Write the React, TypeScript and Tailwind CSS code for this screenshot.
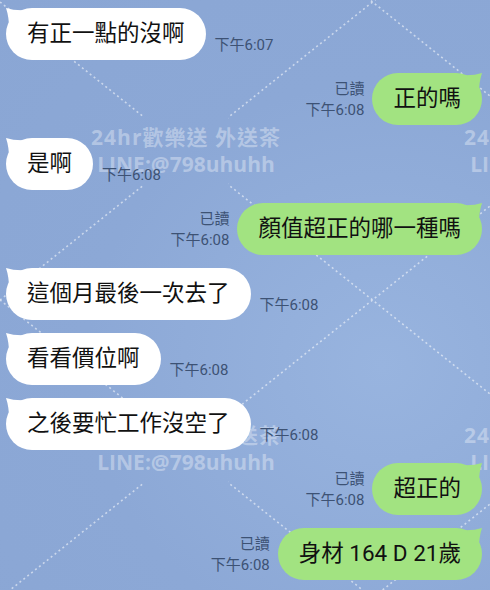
import React from "react";

type Msg = { side: "in" | "out"; text: string; time: string };

const messages: Msg[] = [
  { side: "in", text: "有正一點的沒啊", time: "下午6:07" },
  { side: "out", text: "正的嗎", time: "下午6:08" },
  { side: "in", text: "是啊", time: "下午6:08" },
  { side: "out", text: "顏值超正的哪一種嗎", time: "下午6:08" },
  { side: "in", text: "這個月最後一次去了", time: "下午6:08" },
  { side: "in", text: "看看價位啊", time: "下午6:08" },
  { side: "in", text: "之後要忙工作沒空了", time: "下午6:08" },
  { side: "out", text: "超正的", time: "下午6:08" },
  { side: "out", text: "身材 164 D 21歲", time: "下午6:08" },
];

// watermark centres on the wallpaper lattice
const marks = [
  [186, 151],
  [559, 151],
  [186, 449],
  [559, 449],
];

function Wallpaper() {
  const lines: [number, number, number, number][] = [];
  for (const c of [-296, 2, 300]) lines.push([0, c, 490, 0.8 * 490 + c]);
  for (const c of [300, 598, 896]) lines.push([0, c, 490, -0.8 * 490 + c]);

  return (
    <div className="absolute inset-0">
      <svg width="490" height="590" className="absolute inset-0">
        <defs>
          <mask id="wm">
            <rect width="490" height="590" fill="white" />
            {marks.map(([x, y]) => (
              <rect key={`${x}-${y}`} x={x - 42} y={y - 35} width="84" height="70" fill="black" />
            ))}
          </mask>
        </defs>
        <g mask="url(#wm)" stroke="white" strokeOpacity="0.55" strokeWidth="1.6" strokeDasharray="2 3">
          {lines.map(([x1, y1, x2, y2], i) => (
            <line key={i} x1={x1} y1={y1} x2={x2} y2={y2} />
          ))}
        </g>
      </svg>
      {marks.map(([x, y]) => (
        <div
          key={`t-${x}-${y}`}
          className="absolute flex flex-col items-center font-bold text-white/35 text-[21px] leading-[27px] whitespace-nowrap -translate-x-1/2 -translate-y-1/2 font-['Open_Sans','Noto_Sans_CJK_TC',sans-serif]"
          style={{ left: x, top: y }}
        >
          <span className="tracking-[1px]">24hr歡樂送 外送茶</span>
          <span>LINE:@798uhuhh</span>
        </div>
      ))}
    </div>
  );
}

function Tail({ right }: { right?: boolean }) {
  return (
    <svg
      width="22"
      height="20"
      viewBox="0 0 22 20"
      className={right ? "absolute right-0 top-0 -scale-x-100" : "absolute left-0 top-0"}
    >
      <path d="M0 0 Q9 3 22 2 L22 20 L3 20 Q3 9 0 0 Z" fill={right ? "#a2e381" : "#ffffff"} />
    </svg>
  );
}

function Bubble({ msg }: { msg: Msg }) {
  const out = msg.side === "out";
  return (
    <div className="relative shrink-0">
      <Tail right={out} />
      <div
        className={`relative h-[52px] rounded-[26px] px-[21px] flex items-center text-[22.5px] text-[#111] whitespace-nowrap ${
          out ? "bg-[#a2e381]" : "bg-white"
        }`}
      >
        {msg.text}
      </div>
    </div>
  );
}

export default function App() {
  return (
    <div className="relative w-[490px] h-[590px] overflow-hidden bg-[radial-gradient(ellipse_at_78%_62%,#98b4df_0%,#8ca8d6_55%,#8aa6d4_100%)] font-['Roboto','Noto_Sans_CJK_TC',sans-serif]">
      <Wallpaper />
      <div className="relative flex flex-col gap-[13px] pt-[8px] pl-[6px] pr-[8px]">
        {messages.map((m, i) =>
          m.side === "in" ? (
            <div key={i} className="flex items-end gap-[9px]">
              <Bubble msg={m} />
              <span className="mb-[5px] text-[15px] leading-[20px] text-[#3d5274]">{m.time}</span>
            </div>
          ) : (
            <div key={i} className="flex items-end justify-end gap-[8px]">
              <div className="mb-[4px] flex flex-col items-end text-[15px] leading-[21px] text-[#3d5274]">
                <span>已讀</span>
                <span>{m.time}</span>
              </div>
              <Bubble msg={m} />
            </div>
          )
        )}
      </div>
    </div>
  );
}
